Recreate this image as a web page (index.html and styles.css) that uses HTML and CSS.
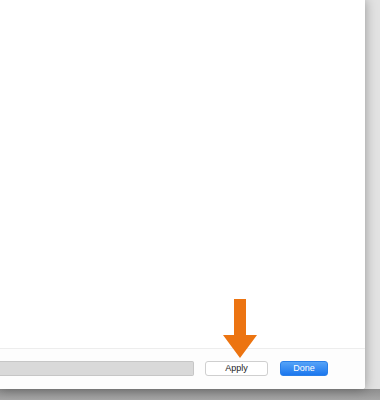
FILE: index.html
```html
<!DOCTYPE html>
<html lang="en">

<head>
    <meta charset="UTF-8">
    <title>Apply</title>
    <link rel="stylesheet" href="styles.css">
</head>

<body>
    <div class="screen">
        <div class="window">
            <div class="content"></div>
            <div class="footer">
                <div class="field"></div>
                <button class="btn btn-apply">Apply</button>
                <button class="btn btn-done">Done</button>
            </div>
            <!-- pointer over the Apply button -->
            <svg class="arrow" width="34" height="60" viewBox="0 0 34 60">
                <path d="M11 0 H23 V36 H34 L17 59 L0 36 H11 Z" fill="#ec7411" />
            </svg>
        </div>
    </div>
</body>

</html>
```

FILE: styles.css
```css
html {
    box-sizing: border-box;
    font-family: 'Liberation Sans', Arial, sans-serif;
}

body {
    margin: 0;
}

*,
*:before,
*:after {
    box-sizing: inherit;
}

.screen {
    width: 380px;
    height: 400px;
    overflow: hidden;
    background: linear-gradient(to bottom, #e2e2e2 0, #e2e2e2 389px, #8e8e8e 389px, #a6a6a6 400px);
}

.window {
    position: relative;
    width: 365px;
    height: 389px;
    background: #fff;
    display: flex;
    flex-direction: column;
    box-shadow: 0 0 12px rgba(0, 0, 0, 0.35);
    border-bottom-right-radius: 3px;
}

.content {
    flex: 1;
}

.footer {
    height: 41px;
    border-top: 1px solid #ededed;
    background: #fdfdfd;
    display: flex;
    align-items: center;
    padding-bottom: 2px;
    border-bottom-right-radius: 3px;
}

.field {
    width: 194px;
    height: 15px;
    background: #d9d9d9;
    border: 1px solid #c6c6c6;
    border-left: none;
    border-radius: 0 2px 2px 0;
}

.btn {
    height: 15px;
    padding: 0;
    font-family: inherit;
    font-size: 9px;
    line-height: 13px;
    border-radius: 3px;
}

.btn-apply {
    width: 63px;
    margin-left: 11px;
    background: #fff;
    color: #222;
    border: 1px solid #cfcfcf;
}

.btn-done {
    width: 48px;
    margin-left: 12px;
    background: linear-gradient(to bottom, #56a3f7, #1b77ee);
    color: #fff;
    border: 1px solid #2a7fe8;
}

.arrow {
    position: absolute;
    left: 223px;
    top: 299px;
}
```
